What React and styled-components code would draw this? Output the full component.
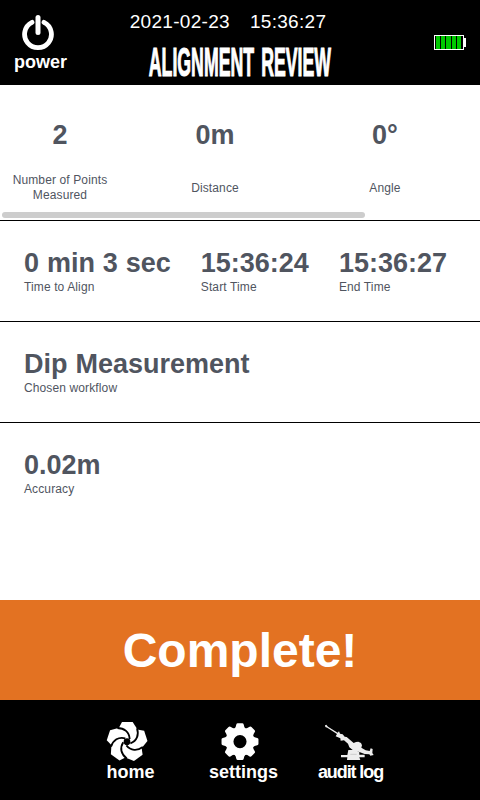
import React from "react";
import styled, { createGlobalStyle } from "styled-components";

const GlobalStyle = createGlobalStyle`
  * { box-sizing: border-box; }
  body { margin: 0; background: #fff; font-family: "Liberation Sans", Arial, sans-serif; }
`;

const Screen = styled.div`
  width: 480px;
  height: 800px;
  display: flex;
  flex-direction: column;
  overflow: hidden;
  background: #fff;
  color: #50555f;
`;

const Header = styled.header`
  height: 85px;
  flex: none;
  display: grid;
  grid-template-columns: 82px minmax(0, 1fr) 82px;
  background: #000;
  color: #fff;
`;

const PowerButton = styled.button`
  display: flex;
  flex-direction: column;
  align-items: center;
  width: 82px;
  padding: 14px 1px 0 0;
  border: 0;
  background: none;
  color: #fff;
  font: bold 18px/20px "Liberation Sans", Arial, sans-serif;
  svg { display: block; margin: 0 5px 1px 0; }
`;

const ButtonLabel = styled.span`
  white-space: nowrap;
  letter-spacing: ${(p) => p.$spacing || 0}px;
`;

const Heading = styled.div`
  display: flex;
  flex-direction: column;
  align-items: center;
`;

const Clock = styled.div`
  display: flex;
  gap: 20px;
  padding-top: 11px;
  margin-right: 24px;
  font-size: 19px;
  line-height: 22px;
  letter-spacing: 0.3px;
  white-space: nowrap;
`;

const Title = styled.h1`
  margin: 6px 0 0;
  font-size: 41px;
  line-height: 46px;
  font-weight: bold;
  white-space: nowrap;
  word-spacing: 5px;
  -webkit-text-stroke: 1.2px #fff;
  transform: scaleX(0.432);
`;

const BatterySlot = styled.div`
  padding: 34px 0 0 36px;
`;

const Summary = styled.section`
  height: 136px;
  flex: none;
  display: flex;
  flex-direction: column;
  justify-content: space-between;
  border-bottom: 1px solid #000;
`;

const SummaryRow = styled.div`
  display: grid;
  grid-template-columns: 120px 190px 150px;
`;

const SummaryItem = styled.div`
  display: flex;
  flex-direction: column;
  align-items: center;
  padding-top: 34px;
  text-align: center;
`;

const Value = styled.div`
  font-size: 27px;
  line-height: 32px;
  font-weight: bold;
  white-space: nowrap;
  word-spacing: 0.4px;
`;

const Caption = styled.div`
  font-size: 12px;
  line-height: 15px;
  letter-spacing: 0.12px;
`;

const SummaryCaption = styled(Caption)`
  display: flex;
  align-items: center;
  width: 100px;
  height: 30px;
  margin-top: 22px;
  justify-content: center;
`;

const ScrollThumb = styled.div`
  width: 363px;
  height: 6px;
  margin: 0 0 2px 2px;
  border-radius: 3px;
  background: #cdcdcd;
`;

const DetailRow = styled.section`
  display: flex;
  flex: none;
  gap: 30px;
  height: ${(p) => (p.$last ? 177 : 101)}px;
  padding: 26px 24px 0;
  border-bottom: ${(p) => (p.$last ? 0 : 1)}px solid #000;
`;

const Detail = styled.div`
  ${Caption} { margin-top: 1px; }
`;

const StatusBanner = styled.div`
  height: 100px;
  flex: none;
  display: flex;
  align-items: center;
  justify-content: center;
  background: #e37222;
  color: #fff;
  font-size: 48px;
  font-weight: bold;
`;

const Footer = styled.nav`
  flex: 1;
  display: grid;
  grid-template-columns: 113px 113px 101px;
  justify-content: center;
  padding-right: 5px;
  background: #000;
`;

const NavButton = styled.button`
  display: flex;
  flex-direction: column;
  align-items: center;
  padding: 21px 0 0;
  border: 0;
  background: none;
  color: #fff;
  font: bold 18px/20px "Liberation Sans", Arial, sans-serif;
  svg { display: block; margin: 0 ${(p) => p.$shift || 0}px 1px 0; }
`;

const PowerIcon = () => (
  <svg width="34" height="37" viewBox="0 0 34 37" fill="none" stroke="#fff" strokeLinecap="round">
    <path d="M11 8.3A13.4 13.4 0 1 0 23 8.3" strokeWidth="4.8" />
    <path d="M17 3.5V18.5" strokeWidth="5" />
  </svg>
);

const BatteryIcon = () => (
  <svg width="34" height="16" viewBox="0 0 34 16" shapeRendering="crispEdges">
    <rect x="0.5" y="1.5" width="29" height="14" fill="#000" stroke="#fff" />
    <rect x="30" y="4" width="2" height="9" fill="#fff" />
    {[2, 7, 12, 18, 23].map((x) => (
      <rect key={x} x={x} y="2" width={x === 12 ? 5 : 4} height="13" fill="#00c800" />
    ))}
  </svg>
);

const blades = [0, 72, 144, 216, 288];

const HomeIcon = () => (
  <svg width="42" height="40" viewBox="-63 -62 126 120">
    <circle r="45" fill="#fff" />
    {blades.map((angle) => (
      <path key={angle} transform={`rotate(${angle})`} fill="#fff" d="M0 0L-25 -40L-15 -59L17 -59L31 -37Z" />
    ))}
    {blades.map((angle) => (
      <path
        key={angle}
        transform={`rotate(${angle})`}
        fill="none"
        stroke="#000"
        strokeWidth="5.5"
        d="M-29 -41C-8 -41 7 -29 8 -8"
      />
    ))}
    <circle r="10" />
  </svg>
);

const GearIcon = () => (
  <svg width="38" height="40" viewBox="-18.5 -20.1 37 39" fill="#fff">
    <circle r="10.2" fill="none" stroke="#fff" strokeWidth="7.6" />
    {[0, 45, 90, 135, 180, 225, 270, 315].map((angle) => (
      <path key={angle} transform={`rotate(${angle})`} d="M-5.4 -12.5Q-4 -14 -3.6 -16.8Q-3.3 -18 -2.2 -18H2.2Q3.3 -18 3.6 -16.8Q4 -14 5.4 -12.5Z" />
    ))}
  </svg>
);

const RigIcon = () => (
  <svg width="50" height="40" viewBox="15 18 150 120" fill="#ededed">
    <path d="M15 31L19 29L24 35L53 53L57 49L60 56L68 58L74 65L80 66L101 84L108 81L115 80L123 84L126 91L124 98L137 106L149 108L152 100L158 102L157 114L161 120L151 122L148 118L134 117L116 110L101 107L88 97L84 86L72 76L62 77L61 70L47 64L51 57L22 38L16 36Z" />
    <path d="M85 105H105L118 111V119H134V127H118L121 135H81L82 127H63V120H82Z" />
    <path d="M91 118H110" stroke="#bbb" strokeWidth="2" />
  </svg>
);

const summary = [
  ["2", "Number of Points Measured"],
  ["0m", "Distance"],
  ["0°", "Angle"],
];

const rows = [
  [["0 min 3 sec", "Time to Align"], ["15:36:24", "Start Time"], ["15:36:27", "End Time"]],
  [["Dip Measurement", "Chosen workflow"]],
  [["0.02m", "Accuracy"]],
];

export default function App() {
  return (
    <Screen>
      <GlobalStyle />
      <Header>
        <PowerButton>
          <PowerIcon />
          <ButtonLabel>power</ButtonLabel>
        </PowerButton>
        <Heading>
          <Clock>
            <span>2021-02-23</span>
            <span>15:36:27</span>
          </Clock>
          <Title>ALIGNMENT REVIEW</Title>
        </Heading>
        <BatterySlot>
          <BatteryIcon />
        </BatterySlot>
      </Header>
      <Summary>
        <SummaryRow>
          {summary.map(([value, caption]) => (
            <SummaryItem key={caption}>
              <Value>{value}</Value>
              <SummaryCaption>{caption}</SummaryCaption>
            </SummaryItem>
          ))}
        </SummaryRow>
        <ScrollThumb />
      </Summary>
      {rows.map((items, i) => (
        <DetailRow key={i} $last={i === rows.length - 1}>
          {items.map(([value, caption]) => (
            <Detail key={caption}>
              <Value>{value}</Value>
              <Caption>{caption}</Caption>
            </Detail>
          ))}
        </DetailRow>
      ))}
      <StatusBanner>Complete!</StatusBanner>
      <Footer>
        <NavButton $shift={7}>
          <HomeIcon />
          <ButtonLabel>home</ButtonLabel>
        </NavButton>
        <NavButton $shift={8}>
          <GearIcon />
          <ButtonLabel>settings</ButtonLabel>
        </NavButton>
        <NavButton $shift={1}>
          <RigIcon />
          <ButtonLabel $spacing={-1.1}>audit log</ButtonLabel>
        </NavButton>
      </Footer>
    </Screen>
  );
}
